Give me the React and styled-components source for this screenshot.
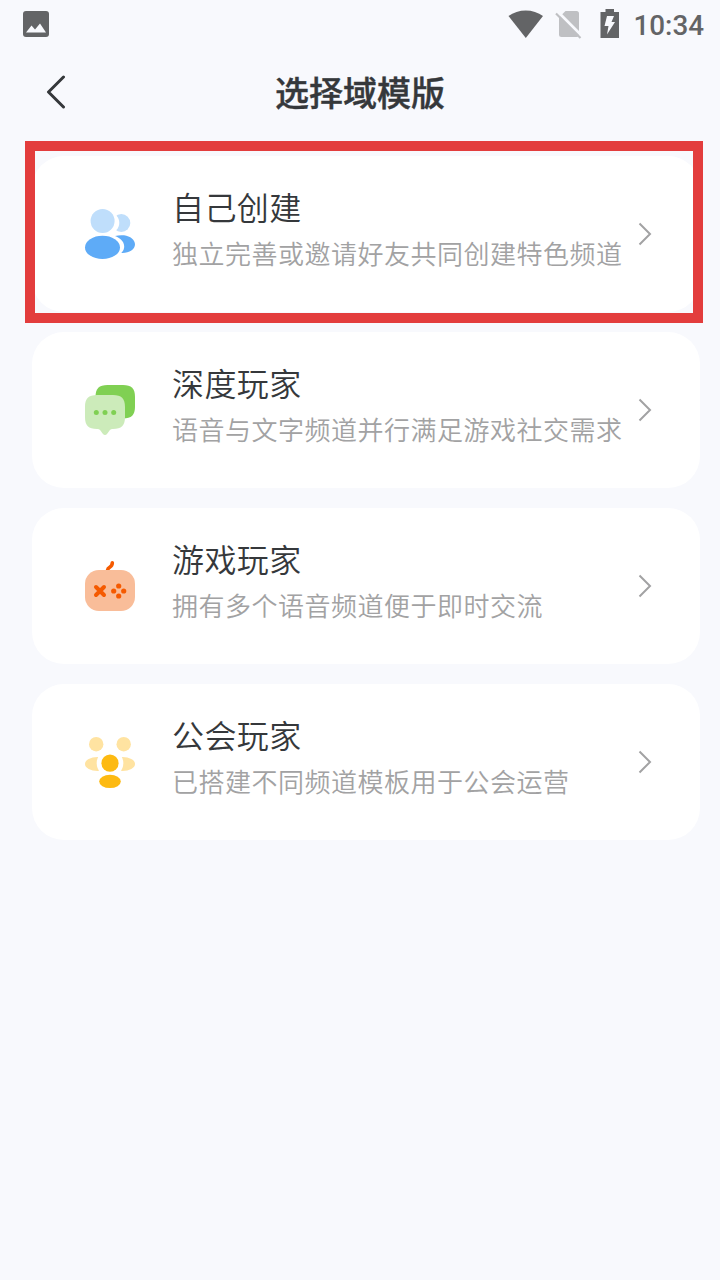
import React from 'react';
import styled, { createGlobalStyle } from 'styled-components';

const templates = [
  { title: '自己创建', desc: '独立完善或邀请好友共同创建特色频道', icon: 'people', selected: true },
  { title: '深度玩家', desc: '语音与文字频道并行满足游戏社交需求', icon: 'chat' },
  { title: '游戏玩家', desc: '拥有多个语音频道便于即时交流', icon: 'game' },
  { title: '公会玩家', desc: '已搭建不同频道模板用于公会运营', icon: 'guild' },
];

const icons = {
  people: (
    <>
      <circle cx="36.3" cy="14" r="9" fill="#bfdefb" />
      <circle cx="23.6" cy="13.8" r="10.7" fill="#fff" />
      <circle cx="17.6" cy="12" r="12" fill="#bfdefb" />
      <path
        d="M30 27C33 26.1 37 26 39 26.3C45.5 27.2 50 31 50 35.3C50 40.5 44 44.3 36.3 43.9C38.5 42 39.3 39.5 39.2 37C38.8 32 35 29 30 27Z"
        fill="#5eabf7"
      />
      <ellipse cx="17.5" cy="38.4" rx="17.5" ry="11.6" fill="#5eabf7" />
    </>
  ),
  chat: (
    <>
      <path
        d="M22.5 0H38C46.5 0 50 3.5 50 12V21.5C50 30 46.5 33.5 38 33.5H10.5V12C10.5 3.5 14 0 22.5 0Z"
        fill="#80d053"
      />
      <path
        d="M12 10H28C36.5 10 40 13.5 40 22V32C40 40.5 36.5 44 28 44H27C25 44 23.5 47 22 49C21 50.3 19 50.3 18 49C16.5 47 15 44 13 44H12C3.5 44 0 40.5 0 32V22C0 13.5 3.5 10 12 10Z"
        fill="#ccebba"
      />
      <circle cx="11.3" cy="27.4" r="2.5" fill="#80d053" />
      <circle cx="20" cy="27.4" r="2.5" fill="#80d053" />
      <circle cx="28.7" cy="27.4" r="2.5" fill="#80d053" />
    </>
  ),
  game: (
    <>
      <path
        d="M22.6 9C23 5.5 27.3 7 27.3 1.8"
        fill="none"
        stroke="#f55a00"
        strokeWidth="3.6"
        strokeLinecap="round"
      />
      <rect y="9" width="50" height="41" rx="14" fill="#f9bd99" />
      <path
        d="M11 26L19 34M19 26L11 34"
        stroke="#f55a00"
        strokeWidth="4"
        strokeLinecap="round"
      />
      <circle cx="33.7" cy="25" r="2.6" fill="#f55a00" />
      <circle cx="33.7" cy="35" r="2.6" fill="#f55a00" />
      <circle cx="28.7" cy="30" r="2.6" fill="#f55a00" />
      <circle cx="38.7" cy="30" r="2.6" fill="#f55a00" />
    </>
  ),
  guild: (
    <>
      <circle cx="11.2" cy="7.2" r="7.2" fill="#ffe3a1" />
      <circle cx="38.7" cy="7.2" r="7.2" fill="#ffe3a1" />
      <ellipse cx="12.5" cy="27" rx="12.5" ry="7" fill="#ffe3a1" />
      <ellipse cx="37.5" cy="27" rx="12.5" ry="7" fill="#ffe3a1" />
      <circle cx="25" cy="26.2" r="13.3" fill="#fff" />
      <circle cx="25" cy="26.2" r="8.6" fill="#fdba12" />
      <ellipse cx="25" cy="44.4" rx="10.8" ry="6.7" fill="#fdba12" />
    </>
  ),
};

const StatusBar = () => (
  <StatusRow>
    <svg width="26" height="26" viewBox="0 0 26 26">
      <rect width="26" height="26" rx="3" fill="#636466" />
      <path d="M3 21.5L8.5 14.5L12 18.5L17 12.5L23 21.5Z" fill="#f8f9fd" />
    </svg>
    <StatusIcons>
      <svg width="36" height="30" viewBox="0 0 36 30">
        <path d="M0.5 7C10 -0.5 25.5 -0.5 35 7L17.8 29Z" fill="#636466" />
      </svg>
      <svg width="28" height="30" viewBox="0 0 28 30">
        <path
          d="M10.5 2H21.5Q24 2 24 4.5V25.5Q24 28 21.5 28H6.5Q4 28 4 25.5V8.5Z"
          fill="#bfc0c3"
        />
        <path d="M2.5 2.5L27.5 27.5" stroke="#f8f9fd" strokeWidth="3" />
        <path d="M1 4.5L25.5 29" stroke="#bfc0c3" strokeWidth="2.2" />
      </svg>
      <Battery width="20" height="30" viewBox="0 0 20 30">
        <path d="M5.5 0H14V3H19V29H0.5V3H5.5Z" fill="#636466" />
        <path d="M7 7H14L11.5 13H15L7 25.5L8.5 17H4.5Z" fill="#f8f9fd" />
      </Battery>
      <Clock>10:34</Clock>
    </StatusIcons>
  </StatusRow>
);

const TemplateCard = ({ title, desc, icon, selected }) => (
  <Card>
    <svg width="50" height="50" viewBox="0 0 50 50" overflow="visible">
      {icons[icon]}
    </svg>
    <CardText>
      <CardTitle>{title}</CardTitle>
      <CardDesc>{desc}</CardDesc>
    </CardText>
    <svg width="14" height="24" viewBox="0 0 14 24">
      <path d="M1.5 1.5L12 12L1.5 22.5" fill="none" stroke="#a2a2a3" strokeWidth="2" />
    </svg>
    {selected && <Highlight />}
  </Card>
);

const App = () => (
  <Screen>
    <GlobalStyle />
    <StatusBar />
    <Header>
      <svg width="20" height="34" viewBox="0 0 20 34">
        <path
          d="M17.5 2L2.5 17L17.5 32"
          fill="none"
          stroke="#35383b"
          strokeWidth="3"
          strokeLinecap="round"
          strokeLinejoin="round"
        />
      </svg>
      <HeaderTitle>选择域模版</HeaderTitle>
    </Header>
    <CardList>
      {templates.map((item) => (
        <TemplateCard key={item.title} {...item} />
      ))}
    </CardList>
  </Screen>
);

const GlobalStyle = createGlobalStyle`
  * {
    box-sizing: border-box;
  }
  body {
    margin: 0;
    background: #f8f9fd;
    font-family: 'Noto Sans CJK SC', sans-serif;
  }
  svg {
    display: block;
    flex-shrink: 0;
  }
`;

const Screen = styled.div`
  min-height: 1280px;
  background: #f8f9fd;
`;

const StatusRow = styled.div`
  display: flex;
  justify-content: space-between;
  align-items: center;
  height: 48px;
  padding: 0 16px 0 23px;
`;

const StatusIcons = styled.div`
  display: flex;
  align-items: center;
  gap: 11px;
`;

const Battery = styled.svg`
  margin-left: 6px;
`;

const Clock = styled.span`
  width: 71px;
  margin-left: 2px;
  padding-top: 3px;
  text-align: right;
  font-family: Roboto, sans-serif;
  font-weight: 500;
  font-size: 27.8px;
  line-height: 30px;
  color: #636466;
`;

const Header = styled.header`
  display: grid;
  grid-template-columns: 20px 1fr 20px;
  align-items: center;
  height: 88px;
  padding: 0 46px;
`;

const HeaderTitle = styled.h1`
  margin: 0;
  text-align: center;
  font-size: 34px;
  line-height: 48px;
  font-weight: 500;
  -webkit-text-stroke: 0.4px #35383b;
  color: #35383b;
`;

const CardList = styled.main`
  display: flex;
  flex-direction: column;
  gap: 20px;
  padding: 20px 20px 0 32px;
`;

const Card = styled.section`
  position: relative;
  display: flex;
  align-items: center;
  height: 156px;
  padding: 0 48px 0 53px;
  border-radius: 32px;
  background: #fff;
`;

const CardText = styled.div`
  flex: 1;
  margin-left: 37px;
  padding-bottom: 9px;
  white-space: nowrap;
`;

const CardTitle = styled.div`
  font-size: 32px;
  line-height: 46px;
  letter-spacing: 0.4px;
  font-weight: 350;
  color: #35383b;
`;

const CardDesc = styled.div`
  font-size: 26px;
  line-height: 47px;
  letter-spacing: 0.5px;
  font-weight: 350;
  color: #a2a2a3;
`;

const Highlight = styled.div`
  position: absolute;
  top: -15px;
  right: -3px;
  bottom: -11px;
  left: -7px;
  border: 10px solid #e33d3d;
`;

export default App;
